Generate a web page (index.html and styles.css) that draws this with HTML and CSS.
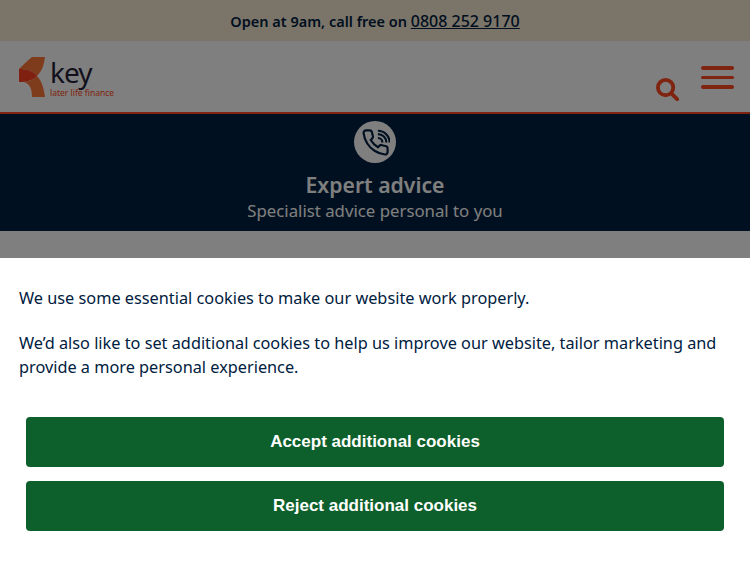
FILE: index.html
```html
<!DOCTYPE html>
<html lang="en">
<head>
    <meta charset="UTF-8">
    <meta name="viewport" content="width=device-width, initial-scale=1.0">
    <title>Key Later Life Finance</title>
    <link rel="stylesheet" href="styles.css">
</head>
<body>
    <div class="topbar">
        <p>Open at 9am, call free on <a href="#">0808 252 9170</a></p>
    </div>

    <header class="site-header">
        <a class="logo" href="#">
            <svg class="logo-mark" viewBox="0 0 29 43" width="29" height="43" aria-hidden="true">
                <path class="petal" d="M14 1H27C26 9 24 15 19 20C15 15 9 13 1 13C5 9 9 5 14 1Z"/>
                <path class="petal" d="M19 20C24 25 26 33 27 41H14C14 33 12 28 6 26C11 25 15 24 19 20Z"/>
                <path class="core" d="M1 13C9 13 15 15 19 20C15 24 9 26 1 26Z"/>
            </svg>
            <span class="logo-text">
                <span class="logo-name">key</span>
                <span class="logo-tag">later life finance</span>
            </span>
        </a>
        <div class="header-actions">
            <a class="search-link" href="#" aria-label="Search">
                <svg viewBox="0 0 24 24" width="23" height="23" aria-hidden="true">
                    <circle cx="10" cy="10" r="8"/>
                    <path d="M16 16L22 22"/>
                </svg>
            </a>
            <button class="menu-toggle" aria-label="Menu">
                <span></span>
                <span></span>
                <span></span>
            </button>
        </div>
    </header>

    <section class="promo">
        <div class="promo-icon">
            <svg viewBox="0 0 24 24" width="29" height="29" aria-hidden="true">
                <path d="M22 16.9v3a2 2 0 0 1-2.2 2 19.8 19.8 0 0 1-8.6-3.1 19.5 19.5 0 0 1-6-6 19.8 19.8 0 0 1-3.1-8.7A2 2 0 0 1 4.1 2h3a2 2 0 0 1 2 1.7c.1 1 .4 1.9.7 2.8a2 2 0 0 1-.5 2.1L8.1 9.9a16 16 0 0 0 6 6l1.3-1.3a2 2 0 0 1 2.1-.4c.9.3 1.8.6 2.8.7a2 2 0 0 1 1.7 2z"/>
                <path d="M14 2.3a9.7 9.7 0 0 1 9.7 9.7"/>
                <path d="M14 5a7 7 0 0 1 7 7"/>
                <path d="M14 8.3a3.7 3.7 0 0 1 3.7 3.7"/>
            </svg>
        </div>
        <h2>Expert advice</h2>
        <p>Specialist advice personal to you</p>
    </section>

    <div class="overlay"></div>

    <div class="cookie-panel">
        <p>We use some essential cookies to make our website work properly.</p>
        <p>We’d also like to set additional cookies to help us improve our website, tailor marketing and provide a more personal experience.</p>
        <div class="cookie-buttons">
            <button class="cookie-btn">Accept additional cookies</button>
            <button class="cookie-btn">Reject additional cookies</button>
        </div>
    </div>
</body>
</html>
```

FILE: styles.css
```css
body {
    margin: 0;
    font-family: "Noto Sans", Arial, sans-serif;
    background-color: #fff;
    color: #002040;
}
p, h2 {
    margin: 0;
}
a {
    color: inherit;
}
.topbar {
    height: 41px;
    display: flex;
    align-items: center;
    justify-content: center;
    background-color: #f5e9d2;
    font-size: 14.5px;
    font-weight: 600;
}
.topbar a {
    font-size: 16px;
    font-weight: 500;
}
.site-header {
    height: 71px;
    display: flex;
    justify-content: space-between;
    padding: 0 16px 0 18px;
    background-color: #fff;
    border-bottom: 2px solid #fe4820;
}
.logo {
    display: flex;
    align-items: flex-start;
    gap: 3px;
    padding-top: 15px;
    text-decoration: none;
}
.petal {
    fill: #ff7838;
}
.core {
    fill: #fe4020;
}
.logo-text {
    display: flex;
    flex-direction: column;
}
.logo-name {
    font-size: 28px;
    line-height: 32px;
    letter-spacing: -1px;
    color: #281f38;
}
.logo-tag {
    font-size: 8.5px;
    line-height: 10px;
    color: #fe4820;
}
.header-actions {
    display: flex;
    align-items: flex-start;
    gap: 22px;
}
.search-link {
    margin-top: 37px;
}
.search-link svg {
    display: block;
    fill: none;
    stroke: #fe4820;
    stroke-width: 4;
    stroke-linecap: round;
}
.menu-toggle {
    width: 33px;
    margin-top: 25px;
    padding: 0;
    display: flex;
    flex-direction: column;
    gap: 6px;
    background: none;
    border: none;
}
.menu-toggle span {
    height: 3.5px;
    border-radius: 2px;
    background-color: #fe4820;
}
.promo {
    height: 117px;
    display: flex;
    flex-direction: column;
    align-items: center;
    background-color: #002040;
    color: #fff;
}
.promo-icon {
    width: 42px;
    height: 42px;
    margin-top: 7px;
    display: flex;
    align-items: center;
    justify-content: center;
    border-radius: 50%;
    background-color: #fff;
}
.promo-icon svg {
    fill: none;
    stroke: #002040;
    stroke-width: 1.8;
}
.promo h2 {
    margin-top: 7px;
    font-size: 21.2px;
    line-height: 30px;
    font-weight: 600;
}
.promo p {
    font-size: 16.8px;
    line-height: 22px;
}
.overlay {
    position: fixed;
    inset: 0;
    background-color: rgba(0, 0, 0, 0.5);
}
.cookie-panel {
    position: fixed;
    left: 0;
    right: 0;
    bottom: 0;
    height: 305px;
    box-sizing: border-box;
    padding: 28px 19px 0;
    background-color: #fff;
    font-size: 16.3px;
    line-height: 24px;
}
.cookie-panel p {
    margin-bottom: 21px;
}
.cookie-buttons {
    display: flex;
    flex-direction: column;
    gap: 14.5px;
    margin: 38px 7px 0;
}
.cookie-btn {
    height: 49.5px;
    border: none;
    border-radius: 4px;
    background-color: #0d5f2b;
    color: #fff;
    font-family: "Liberation Sans", Arial, sans-serif;
    font-size: 17px;
    font-weight: 700;
}
```
